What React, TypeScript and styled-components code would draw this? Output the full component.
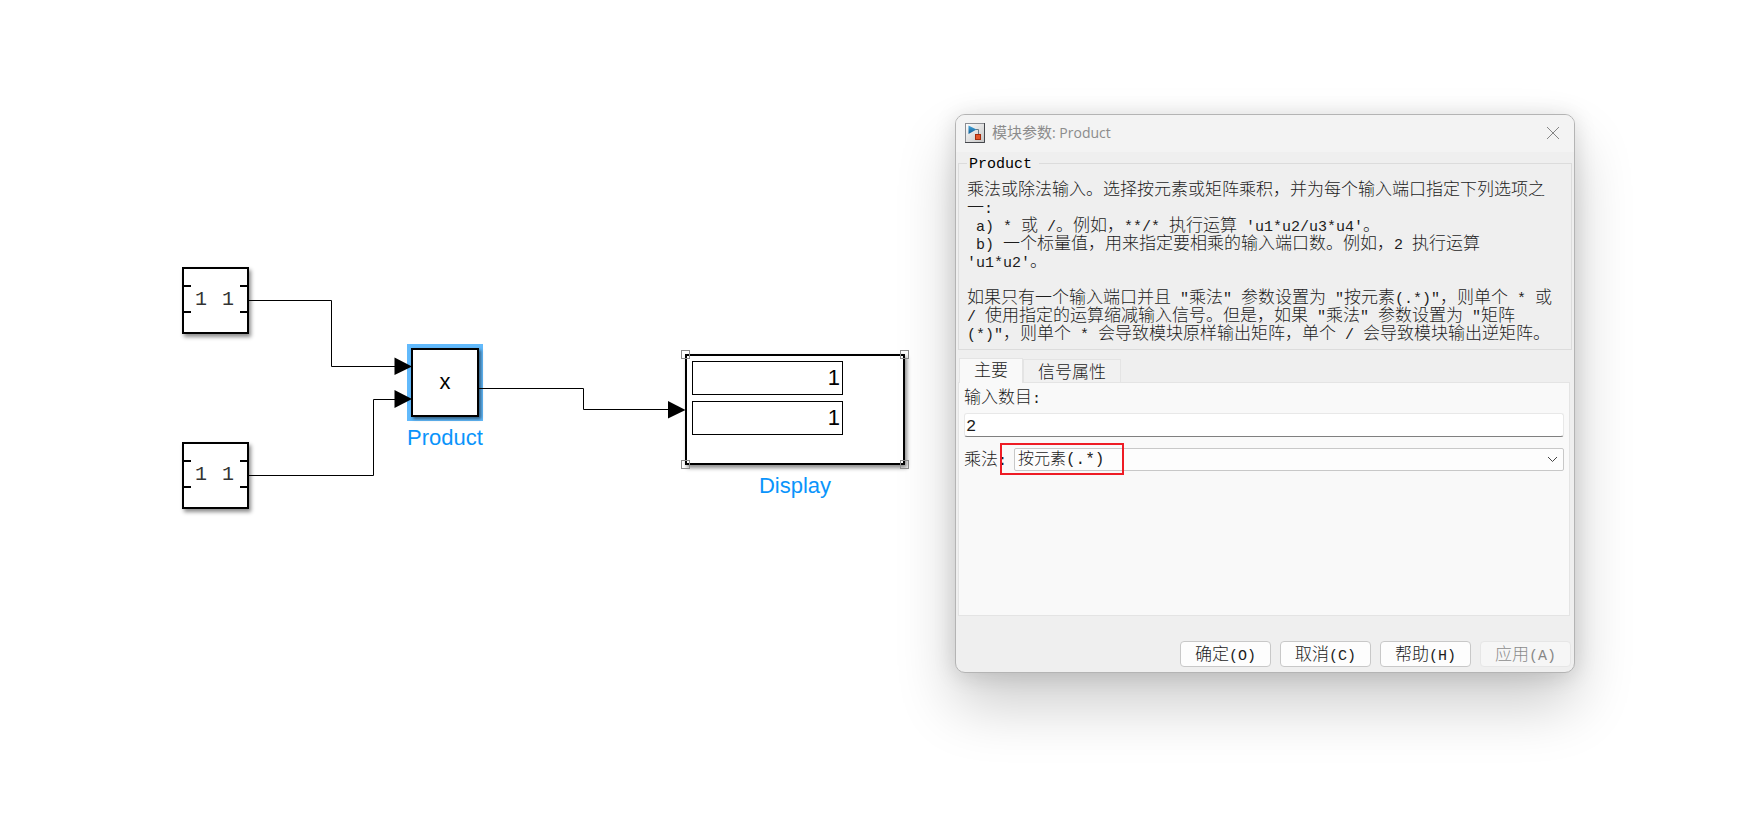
import React, { useState } from 'react';
import styled, { createGlobalStyle } from 'styled-components';

const songFont = '"Liberation Mono", "Noto Sans CJK SC", monospace';

const GlobalStyle = createGlobalStyle`
  *, *::before, *::after { box-sizing: border-box; }
  body { margin: 0; background: #fff; color: #000; font-family: ${songFont}; }
`;

/* ---------- page ---------- */

const Page = styled.main`
  position: relative;
  display: grid;
  grid-template-columns: 955fr 620fr 185fr;
  align-items: start;
  min-height: 100vh;
  padding: 114px 0;
`;

/* ---------- diagram ---------- */

const Canvas = styled.section`
  position: absolute;
  inset: 0;
`;

const Wires = styled.svg`
  position: absolute;
  left: 0;
  top: 0;
  width: 920px;
  height: 520px;
`;

interface NodeProps { $x: number; $y: number; $w: number; $h: number; $selected?: boolean }

const Block = styled.div<NodeProps>`
  position: absolute;
  left: ${p => p.$x}px;
  top: ${p => p.$y}px;
  width: ${p => p.$w}px;
  height: ${p => p.$h}px;
  border: 2px solid #000;
  background: #fff;
  box-shadow: ${p => (p.$selected
    ? '2px 2px 3px rgba(0, 0, 0, 0.5), 0 0 0 4px #62bafc'
    : '2px 3px 4px rgba(0, 0, 0, 0.45)')};
`;

const Matrix = styled.div`
  display: flex;
  align-items: center;
  justify-content: center;
  gap: 15px;
  height: 100%;
  padding: 0 2px 2px 0;
  font-size: 20px;
  line-height: 24px;
  color: #333;
`;

const Bracket = styled.span<{ $side: 'left' | 'right' }>`
  position: absolute;
  top: 16px;
  ${p => p.$side}: -2px;
  width: 9px;
  height: 28px;
  border: 2px solid #000;
  border-${p => (p.$side === 'left' ? 'right' : 'left')}: 0;
`;

const Operator = styled.div`
  display: flex;
  align-items: center;
  justify-content: center;
  height: 100%;
  padding-bottom: 2px;
  font: 22px/24px "Liberation Sans", sans-serif;
`;

const NodeName = styled.div`
  position: absolute;
  top: 100%;
  left: 50%;
  transform: translateX(-50%);
  margin-top: 10px;
  font: 22px/26px "Liberation Sans", sans-serif;
  color: #0a94fb;
`;

const Readouts = styled.div`
  display: grid;
  gap: 6px;
  width: 151px;
  margin: 5px 0 0 5px;
`;

const Readout = styled.output`
  height: 34px;
  padding-right: 2px;
  border: 1px solid #000;
  font: 22px/32px "Liberation Sans", sans-serif;
  text-align: right;
`;

const Handle = styled.span<{ $v: 'top' | 'bottom'; $h: 'left' | 'right' }>`
  position: absolute;
  ${p => p.$v}: -6px;
  ${p => p.$h}: -6px;
  width: 9px;
  height: 9px;
  border: 1px solid #8a8a8a;
`;

/* ---------- dialog ---------- */

const Dialog = styled.section`
  position: relative;
  grid-column: 2;
  display: flex;
  flex-direction: column;
  min-width: 600px;
  border: 1px solid #b4b4b4;
  border-radius: 10px;
  background: #efefef;
  box-shadow: 0 32px 60px rgba(0, 0, 0, 0.2), 0 2px 22px rgba(0, 0, 0, 0.13);
`;

const TitleBar = styled.header`
  display: flex;
  align-items: center;
  gap: 7px;
  height: 37px;
  padding: 0 14px 2px 9px;
  border-radius: 9px 9px 0 0;
  background: #f3f3f3;
`;

const Title = styled.h1`
  flex: 1;
  margin: 0;
  font: 400 15px/20px "Noto Sans CJK SC", sans-serif;
  color: #8c8c8c;
`;

const TitleName = styled.span`
  font-family: "Open Sans", sans-serif;
  font-size: 14px;
`;

const CloseButton = styled.button`
  display: flex;
  padding: 0;
  border: 0;
  background: none;
`;

const Group = styled.fieldset`
  min-width: 0;
  margin: 0 2px;
  padding: 4px 8px 8px;
  border: 1px solid #dcdcdc;
`;

const Legend = styled.legend`
  padding: 3px 7px 0 2px;
  font-size: 15px;
  line-height: 20px;
`;

const Description = styled.p`
  margin: 0;
  line-height: 18px;
  white-space: pre;
`;

const Line = styled.span`
  display: block;
  height: 18px;
`;

const Wide = styled.span`
  display: inline-block;
  font-family: "Noto Sans CJK SC", sans-serif;
  font-size: 17px;
  font-weight: 300;
  line-height: 18px;
  color: #1c1c1c;
`;

const Narrow = styled.span`
  display: inline-block;
  font-family: ${songFont};
  font-size: 15px;
  line-height: 18px;
  color: #1c1c1c;
`;

const Tabs = styled.div`
  display: flex;
  align-items: flex-end;
  margin: 8px 0 0 3px;
`;

const Tab = styled.button<{ $active: boolean }>`
  height: ${p => (p.$active ? 25 : 23)}px;
  margin-bottom: ${p => (p.$active ? -1 : 0)}px;
  padding: ${p => (p.$active ? '0 14px' : '2px 14px 0')};
  border: 1px solid #e4e4e4;
  border-bottom: 0;
  background: ${p => (p.$active ? '#f9f9f9' : '#f1f1f1')};
  color: inherit;
  line-height: 22px;
  z-index: ${p => (p.$active ? 1 : 0)};
`;

const Panel = styled.div`
  display: flex;
  flex-direction: column;
  height: 234px;
  margin: 0 4px 0 2px;
  padding: 4px 5px;
  border: 1px solid #e4e4e4;
  background: #f9f9f9;
`;

const Label = styled.label`
  line-height: 20px;
`;

const TextField = styled.input`
  width: 100%;
  height: 24px;
  margin: 4px 0 11px;
  padding: 2px 1px 0;
  border: 1px solid #e8e8e8;
  border-bottom-color: #808080;
  border-radius: 3px;
  background: #fff;
  color: #1c1c1c;
  font: 17px/20px ${songFont};
`;

const Row = styled.div`
  display: flex;
  align-items: center;
  gap: 7px;
`;

const SelectWrap = styled.div`
  position: relative;
  flex: 1;
  display: flex;
  align-items: center;
`;

const Select = styled.select`
  appearance: none;
  width: 100%;
  height: 23px;
  padding: 0 3px;
  border: 1px solid #c8c8c8;
  border-radius: 2px;
  background: #fdfdfd;
  color: #1c1c1c;
  font: 300 16px/20px ${songFont};
`;

const Chevron = styled.svg`
  position: absolute;
  right: 6px;
  pointer-events: none;
`;

const Marker = styled.span`
  position: absolute;
  left: -14px;
  top: -5px;
  width: 124px;
  height: 32px;
  border: 2px solid #ee1c25;
  pointer-events: none;
`;

const Footer = styled.footer`
  display: flex;
  justify-content: flex-end;
  gap: 9px;
  padding: 25px 3px 5px;
`;

const Button = styled.button`
  width: 91px;
  height: 26px;
  padding: 2px 0 0;
  border: 1px solid #c8c8c8;
  border-radius: 4px;
  background: #fdfdfd;
  color: #000;
  line-height: 22px;
  &:disabled { border-color: #dedede; background: #fdfdfd; opacity: 0.5; }
`;

/* Full-width characters and half-width characters use different faces. */
function Song({ children }: { children: string }) {
  const runs = children.match(/[\x20-\x7e]+|[^\x20-\x7e]+/g) ?? [];
  return (
    <>
      {runs.map((run, i) =>
        /^[\x20-\x7e]/.test(run) ? <Narrow key={i}>{run}</Narrow> : <Wide key={i}>{run}</Wide>
      )}
    </>
  );
}

const lines = [
  '乘法或除法输入。选择按元素或矩阵乘积，并为每个输入端口指定下列选项之',
  '一:',
  " a) * 或 /。例如，**/* 执行运算 'u1*u2/u3*u4'。",
  ' b) 一个标量值，用来指定要相乘的输入端口数。例如，2 执行运算',
  "'u1*u2'。",
  '',
  '如果只有一个输入端口并且 "乘法" 参数设置为 "按元素(.*)"，则单个 * 或',
  '/ 使用指定的运算缩减输入信号。但是，如果 "乘法" 参数设置为 "矩阵',
  '(*)"，则单个 * 会导致模块原样输出矩阵，单个 / 会导致模块输出逆矩阵。',
];

const tabs = ['主要', '信号属性'];

function ConstantBlock({ y }: { y: number }) {
  return (
    <Block $x={182} $y={y} $w={67} $h={67}>
      <Bracket $side="left" />
      <Matrix><span>1</span><span>1</span></Matrix>
      <Bracket $side="right" />
    </Block>
  );
}

function BlockIcon() {
  return (
    <svg width="20" height="20" viewBox="0 0 20 20" aria-hidden="true">
      <defs>
        <linearGradient id="tile" x1="0" y1="0" x2="1" y2="1">
          <stop offset="0" stopColor="#fff" />
          <stop offset="1" stopColor="#c4c4c4" />
        </linearGradient>
        <linearGradient id="tri" x1="0" y1="0" x2="0" y2="1">
          <stop offset="0" stopColor="#49a6da" />
          <stop offset="1" stopColor="#0b5d97" />
        </linearGradient>
      </defs>
      <rect x="0.5" y="0.5" width="19" height="19" fill="url(#tile)" stroke="#8b8d92" />
      <path d="M0 19.5H19.5V0" fill="none" stroke="#45474c" />
      <path d="M11 6.5H13.5V11" fill="none" stroke="#6a7a86" />
      <path d="M3.5 2.5L11.5 6.5L3.5 11Z" fill="url(#tri)" />
      <rect x="10.5" y="11.5" width="5" height="5" fill="#e4562a" stroke="#a52c0c" />
    </svg>
  );
}

export default function App() {
  const [tab, setTab] = useState(0);
  const [count, setCount] = useState('2');
  return (
    <>
      <GlobalStyle />
      <Page>
        <Canvas aria-label="Model">
          <ConstantBlock y={267} />
          <ConstantBlock y={442} />
          <Block $x={411} $y={348} $w={68} $h={69} $selected>
            <Operator>x</Operator>
            <NodeName>Product</NodeName>
          </Block>
          <Block $x={685} $y={354} $w={220} $h={111}>
            <Readouts>
              <Readout>1</Readout>
              <Readout>1</Readout>
            </Readouts>
            <Handle $v="top" $h="left" />
            <Handle $v="top" $h="right" />
            <Handle $v="bottom" $h="left" />
            <Handle $v="bottom" $h="right" />
            <NodeName>Display</NodeName>
          </Block>
          <Wires viewBox="0 0 920 520" aria-hidden="true">
            <g fill="none" stroke="#000">
              <path d="M249 300.5H331.5V366.5H396" />
              <path d="M249 475.5H373.5V399.5H396" />
              <path d="M479 388.5H583.5V409.5H670" />
            </g>
            <path d="M394.5 357.5L412 366.5L394.5 375Z" />
            <path d="M394.5 390L412 399L394.5 408Z" />
            <path d="M668 401L685.5 410L668 418.5Z" />
          </Wires>
        </Canvas>

        <Dialog role="dialog" aria-labelledby="dialog-title">
          <TitleBar>
            <BlockIcon />
            <Title id="dialog-title">模块参数<TitleName>: Product</TitleName></Title>
            <CloseButton aria-label="Close">
              <svg width="14" height="14" viewBox="0 0 14 14" stroke="#858585" fill="none">
                <path d="M1 1L13 13M13 1L1 13" />
              </svg>
            </CloseButton>
          </TitleBar>

          <Group>
            <Legend>Product</Legend>
            <Description>
              {lines.map((line, i) => <Line key={i}><Song>{line}</Song></Line>)}
            </Description>
          </Group>

          <Tabs role="tablist">
            {tabs.map((name, i) => (
              <Tab key={name} role="tab" aria-selected={tab === i} $active={tab === i} onClick={() => setTab(i)}>
                <Song>{name}</Song>
              </Tab>
            ))}
          </Tabs>
          <Panel role="tabpanel">
            <Label htmlFor="inputs"><Song>输入数目:</Song></Label>
            <TextField id="inputs" value={count} onChange={e => setCount(e.target.value)} />
            <Row>
              <Label htmlFor="multiplication"><Song>乘法:</Song></Label>
              <SelectWrap>
                <Select id="multiplication">
                  <option>按元素(.*)</option>
                  <option>矩阵(*)</option>
                </Select>
                <Chevron width="11" height="7" viewBox="0 0 11 7" fill="none" stroke="#444">
                  <path d="M1 1L5.5 5.5L10 1" />
                </Chevron>
                <Marker />
              </SelectWrap>
            </Row>
          </Panel>

          <Footer>
            <Button><Song>确定(O)</Song></Button>
            <Button><Song>取消(C)</Song></Button>
            <Button><Song>帮助(H)</Song></Button>
            <Button disabled><Song>应用(A)</Song></Button>
          </Footer>
        </Dialog>
      </Page>
    </>
  );
}
